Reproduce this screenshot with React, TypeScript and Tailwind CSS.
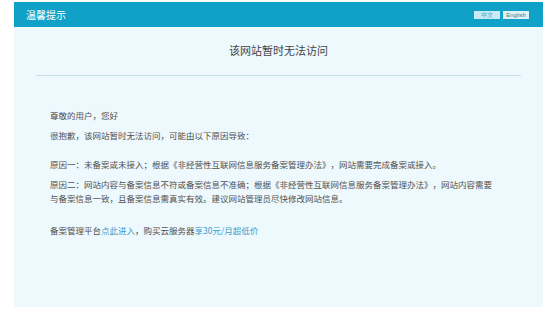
const reasons = [
  "原因一：未备案或未接入；根据《非经营性互联网信息服务备案管理办法》，网站需要完成备案或接入。",
  "原因二：网站内容与备案信息不符或备案信息不准确；根据《非经营性互联网信息服务备案管理办法》，网站内容需要与备案信息一致，且备案信息需真实有效。建议网站管理员尽快修改网站信息。",
];

export default function App() {
  return (
    <div className="w-[550px] h-[313px] bg-white pt-[2px] pl-[14px] font-['Noto_Sans_CJK_SC',sans-serif]">
      <div className="w-[529px] h-[305px] bg-[#eef9fe]">
        <div className="h-[25px] bg-[#0fa1c7] flex items-center justify-between pl-[12px] pr-[14px]">
          <span className="text-[10px] text-white leading-none">温馨提示</span>
          <div className="flex gap-[3px]">
            <span className="w-[26px] h-[8px] bg-[#c9ebf5] text-[#5aa7c2] text-[6px] leading-[8px] text-center">
              中文
            </span>
            <span className="w-[26px] h-[8px] bg-[#def2f8] text-[#3e7f95] text-[6px] leading-[8px] text-center font-['Liberation_Sans',sans-serif]">
              English
            </span>
          </div>
        </div>

        <h1 className="mt-[15px] text-center text-[11px] leading-[16px] text-[#444]">
          该网站暂时无法访问
        </h1>
        <div className="mt-[17px] mx-[22px] border-t border-[#c6e3ec]" />

        <div className="mt-[32px] pl-[36px] pr-[46px] text-[8.5px] leading-[14px] text-[#505050] [text-spacing-trim:space-all]">
          <p>尊敬的用户，您好</p>
          <p className="mt-[6px]">很抱歉，该网站暂时无法访问，可能由以下原因导致：</p>
          <p className="mt-[15px]">{reasons[0]}</p>
          <p className="mt-[6px]">{reasons[1]}</p>
          <p className="mt-[18px]">
            备案管理平台<span className="text-[#3b9ccb]">点此进入</span>，购买云服务器
            <span className="text-[#3b9ccb]">享30元/月超低价</span>
          </p>
        </div>
      </div>
    </div>
  );
}
